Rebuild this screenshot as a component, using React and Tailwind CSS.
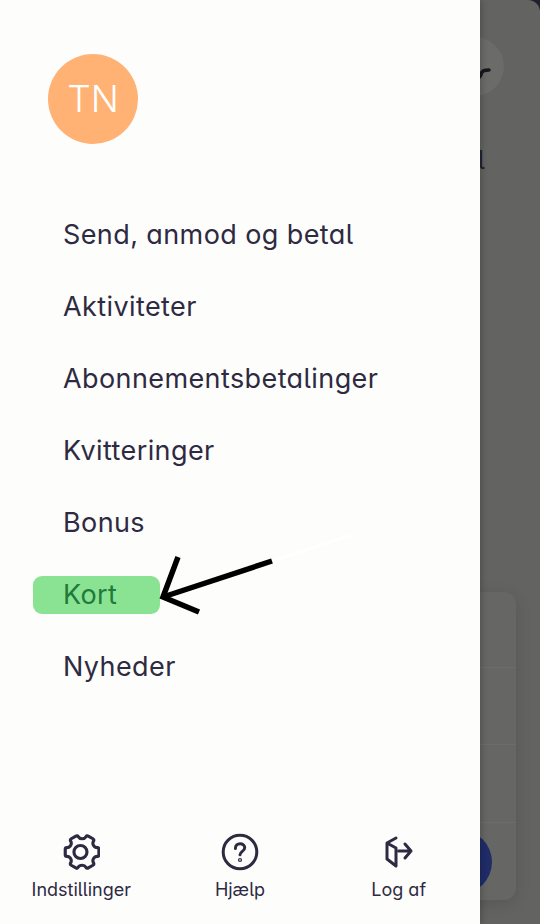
const items = ["Send, anmod og betal", "Aktiviteter", "Abonnementsbetalinger", "Kvitteringer", "Bonus", "Kort", "Nyheder"];

function Gear() {
  return (
    <svg width="38" height="38" viewBox="2 1.500 35 35" fill="none" stroke="#2e2a42" strokeWidth="2.900" strokeLinejoin="round" strokeLinecap="round">
      <circle cx="19" cy="19" r="6" />
      <path transform="rotate(90 19 19)" d="M15 3.500c0-1 .7-1.500 1.500-1.500h5c.8 0 1.500.5 1.500 1.500 0 3 3.500 5 6 3.500 .9-.5 1.700-.3 2.200.5l2.500 4.300c.5.8.2 1.600-.6 2.100-2.500 1.500-2.500 5.700 0 7.200 .8.5 1.100 1.300.6 2.100l-2.500 4.300c-.5.8-1.300 1-2.200.5-2.500-1.500-6 .5-6 3.500 0 1-.7 1.500-1.500 1.500h-5c-.8 0-1.500-.5-1.500-1.500 0-3-3.500-5-6-3.500-.9.5-1.700.3-2.200-.5l-2.500-4.300c-.5-.8-.2-1.600.6-2.100 2.500-1.500 2.500-5.700 0-7.200-.8-.5-1.100-1.300-.6-2.100l2.500-4.300c.5-.8 1.300-1 2.200-.5 2.500 1.500 6-.5 6-3.500z" />
    </svg>
  );
}
function Help() {
  return (
    <svg width="38" height="38" viewBox="0 0 38 38" fill="none" stroke="#2e2a42" strokeWidth="3" strokeLinecap="round">
      <circle cx="19" cy="19" r="16.800" />
      <path d="M14.400 15.400c0-3 2.100-4.600 4.700-4.600 2.600 0 4.600 1.600 4.600 4 0 3.600-4.700 3.600-4.700 7" />
      <circle cx="19" cy="27" r="0.600" fill="#2e2a42" />
    </svg>
  );
}
function Logout() {
  return (
    <svg width="38" height="38" viewBox="0 0 38 38" fill="none" stroke="#2e2a42" strokeWidth="3" strokeLinecap="round" strokeLinejoin="round">
      <path d="M16 5 7 10v16l9 7V15L7 10" />
      <path d="M18.500 18H31M25 11l6 7-6 7" />
    </svg>
  );
}

export default function App() {
  return (
    <div className="relative h-[924px] w-[540px] overflow-hidden bg-[#20202e] font-['Inter','Noto_Sans',sans-serif] [font-feature-settings:'cv11','cv05']">
      {/* dimmed page behind the drawer */}
      <div className="flex h-full w-full flex-col items-end rounded-tr-[12px] bg-[#636362]">
        <div className="mt-[37px] mr-[36px] flex h-[59px] w-[59px] items-center justify-end rounded-full bg-[#6b6b6a] pt-[12px] pr-[13px]">
          <svg width="14" height="14" viewBox="0 0 14 14" fill="none" stroke="#17171c" strokeWidth="3.500" strokeLinecap="round">
            <path d="M1 12c2-1 3-3 3.500-5 .5-2 2.500-3 7.500-3" />
          </svg>
        </div>
        <div className="mt-[48px] mr-[55px] text-[26px] leading-8 text-[#24242a]">l</div>
        <div className="mt-[416px] mr-[24px] flex h-[308px] w-[160px] flex-col rounded-[12px] bg-[#666665] shadow-[0_4px_16px_rgba(0,0,0,0.12)]">
          <div className="h-[76px] border-b border-[#6c6c6b]" />
          <div className="h-[77px] border-b border-[#6c6c6b]" />
          <div className="h-[78px] border-b border-[#6c6c6b]" />
          <div className="flex flex-1 items-center justify-end pr-[24px]">
            <div className="h-[64px] w-[64px] rounded-full bg-[#1f2c67]" />
          </div>
        </div>
      </div>

      {/* drawer */}
      <div className="absolute inset-y-0 left-0 flex w-[480px] flex-col bg-[#fdfdfc] text-[#2e2a42] shadow-[2px_0_6px_rgba(0,0,0,0.2)]">
        <div className="mt-[54px] ml-[48px] flex h-[90px] w-[90px] items-center justify-center rounded-full bg-[#ffb273] pb-[2px] text-[37px] font-light leading-none text-white">
          TN
        </div>
        <nav className="mt-[54px] flex flex-col">
          {items.map((t) => (
            <div key={t} className="relative flex h-[72px] items-center pl-[63px] text-[27px] leading-none tracking-[0.4px]">
              {t === "Kort" && (
                <span className="absolute top-[18px] left-[33px] h-[38px] w-[127px] rounded-[9px] bg-[#8ae393]" />
              )}
              <span className={t === "Kort" ? "relative text-[#217a3c]" : "relative"}>{t}</span>
            </div>
          ))}
        </nav>
        <div className="mt-auto mb-[22px] ml-[2px] grid w-[476px] grid-cols-3 text-center text-[18px] leading-6">
          <div className="flex flex-col items-center gap-[7px]">
            <Gear />
            <span>Indstillinger</span>
          </div>
          <div className="flex flex-col items-center gap-[7px]">
            <Help />
            <span>Hjælp</span>
          </div>
          <div className="flex flex-col items-center gap-[7px]">
            <Logout />
            <span>Log af</span>
          </div>
        </div>
      </div>

      {/* annotation arrow */}
      <svg className="absolute top-[530px] left-[155px]" width="200" height="90" viewBox="0 0 200 90" fill="none">
        <path d="M117 31 8 67" stroke="#000" strokeWidth="5.500" />
        <path d="M23 27 8 67 44 82" stroke="#000" strokeWidth="5.500" />
        <path d="M120 30 197 5" stroke="#fff" strokeWidth="3" />
      </svg>
    </div>
  );
}
